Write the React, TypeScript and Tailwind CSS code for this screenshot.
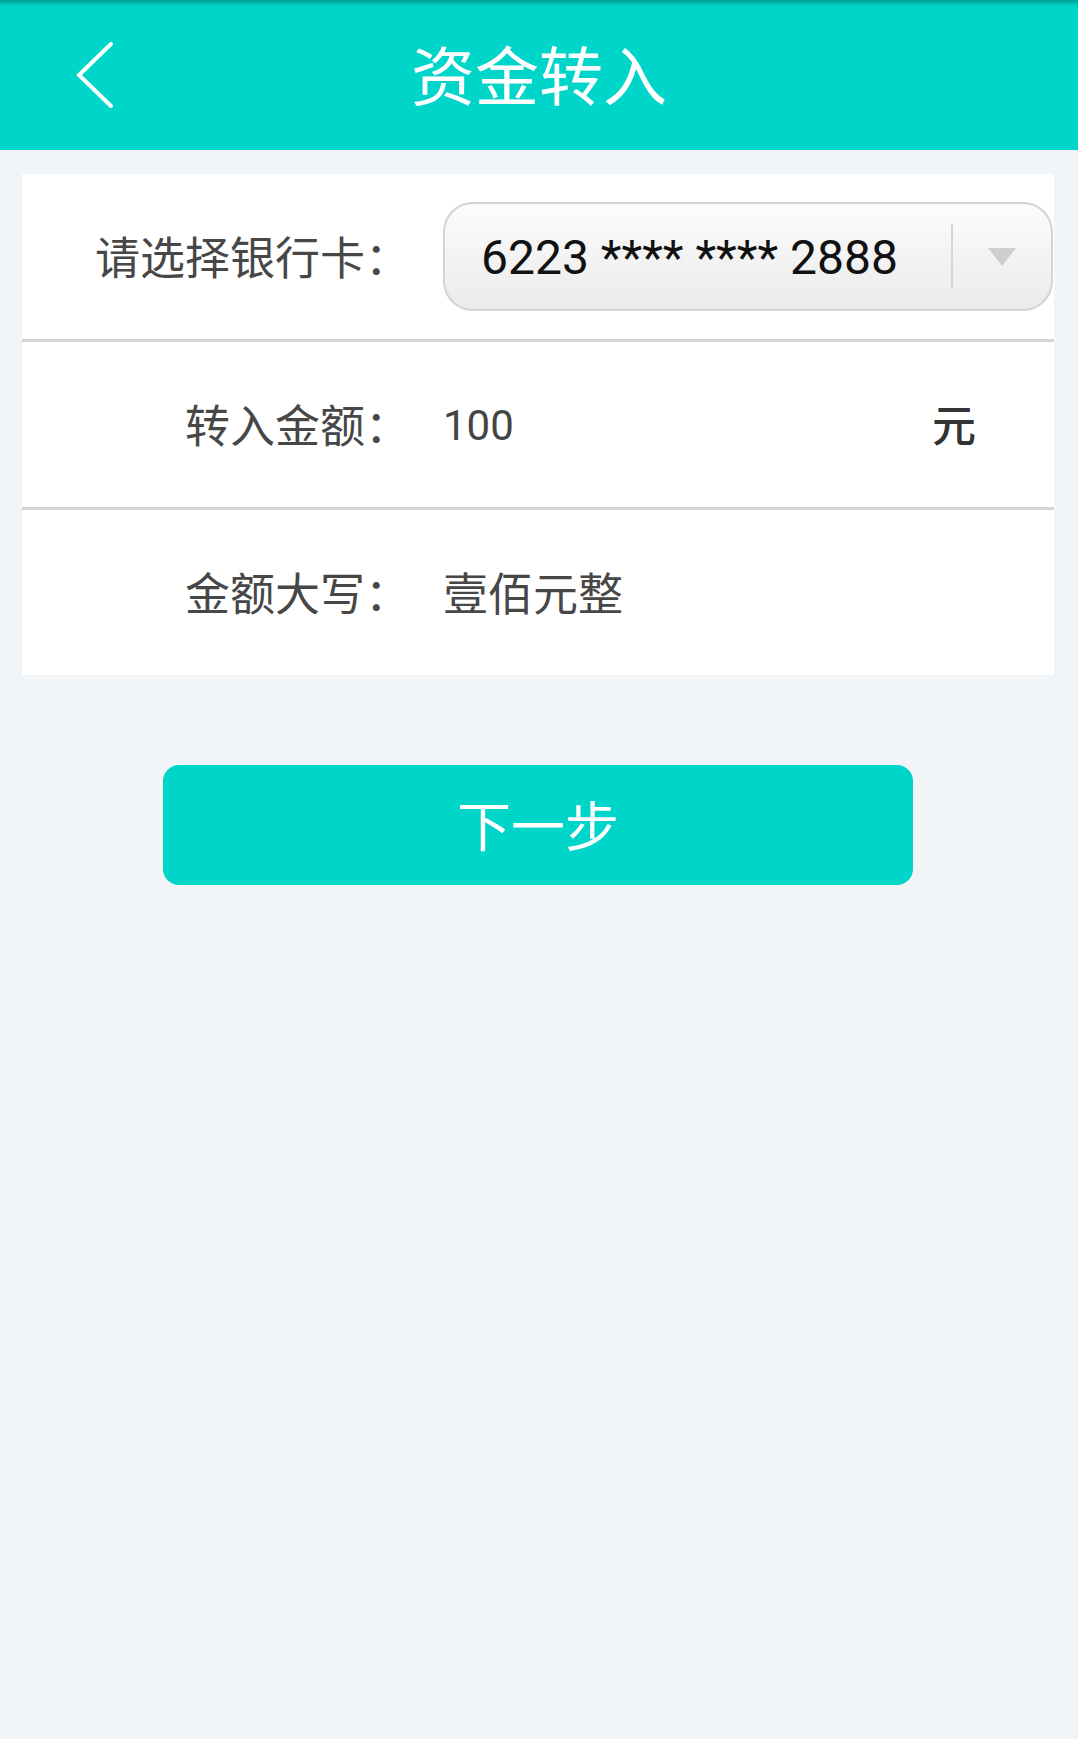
// Transfer-in screen: pick a bank card, enter the amount, see it in capital numerals.

const TEAL = 'bg-[#00d5c9]';

function BackChevron() {
  return (
    <svg width="40" height="70" viewBox="0 0 40 70" fill="none" aria-hidden="true">
      <polyline points="35,4 3,35 35,66" stroke="white" strokeWidth="4" strokeLinecap="round" strokeLinejoin="miter" />
    </svg>
  );
}

function Row({ label, children, divider = true }: { label: string; children: React.ReactNode; divider?: boolean }) {
  return (
    <>
      <div className="flex h-[165px] items-center">
        <div className="w-[388px] shrink-0 pt-[5px] text-right text-[45px] leading-none text-[#474747]">{label}</div>
        <div className="ml-[33px] flex min-w-0 flex-1 items-center">{children}</div>
      </div>
      {divider && <div className="h-[3px] bg-[#d6d6d6]" />}
    </>
  );
}

export default function App() {
  return (
    <div
      className="min-h-[1739px] w-full bg-[#f2f5f8]"
      style={{ fontFamily: 'Roboto, "Noto Sans CJK SC", "Noto Sans", sans-serif' }}
    >
      <header className={`relative flex h-[150px] items-center justify-center ${TEAL}`}>
        <div className="absolute inset-x-0 top-0 h-[6px] bg-linear-to-b from-[#009e95] to-[#00d5c9]" />
        <button className="absolute left-[76px] top-[40px]">
          <BackChevron />
        </button>
        <h1 className="pt-[8px] text-[64px] font-normal leading-none text-white">资金转入</h1>
      </header>

      <section className="ml-[22px] mr-[24px] mt-[24px] bg-white">
        <Row label="请选择银行卡：">
          <div className="flex h-[109px] w-[610px] items-center rounded-[30px] border-2 border-[#d4d4d4] bg-linear-to-b from-[#fcfcfc] to-[#ebebeb]">
            <span className="pl-[36px] pt-[2px] text-[48px] leading-none text-[#111]">6223 **** **** 2888</span>
            <div className="ml-auto h-[65px] w-[2px] bg-[#d6d6d6]" />
            <div className="flex w-[98px] items-center justify-center">
              <svg width="28" height="18" viewBox="0 0 28 18" aria-hidden="true">
                <polygon points="0,0 28,0 14,18" fill="#cfcfcf" />
              </svg>
            </div>
          </div>
        </Row>
        <Row label="转入金额：">
          <span className="pt-[3px] text-[42px] leading-none text-[#444]">100</span>
          <span className="ml-auto mr-[78px] pt-[4px] text-[44px] font-medium leading-none text-[#333]">元</span>
        </Row>
        <Row label="金额大写：" divider={false}>
          <span className="pt-[5px] text-[45px] leading-none text-[#474747]">壹佰元整</span>
        </Row>
      </section>

      <button
        className={`ml-[163px] mt-[90px] flex h-[120px] w-[750px] items-center justify-center rounded-[16px] ${TEAL}`}
      >
        <span className="pt-[8px] text-[54px] font-normal leading-none text-white">下一步</span>
      </button>
    </div>
  );
}
